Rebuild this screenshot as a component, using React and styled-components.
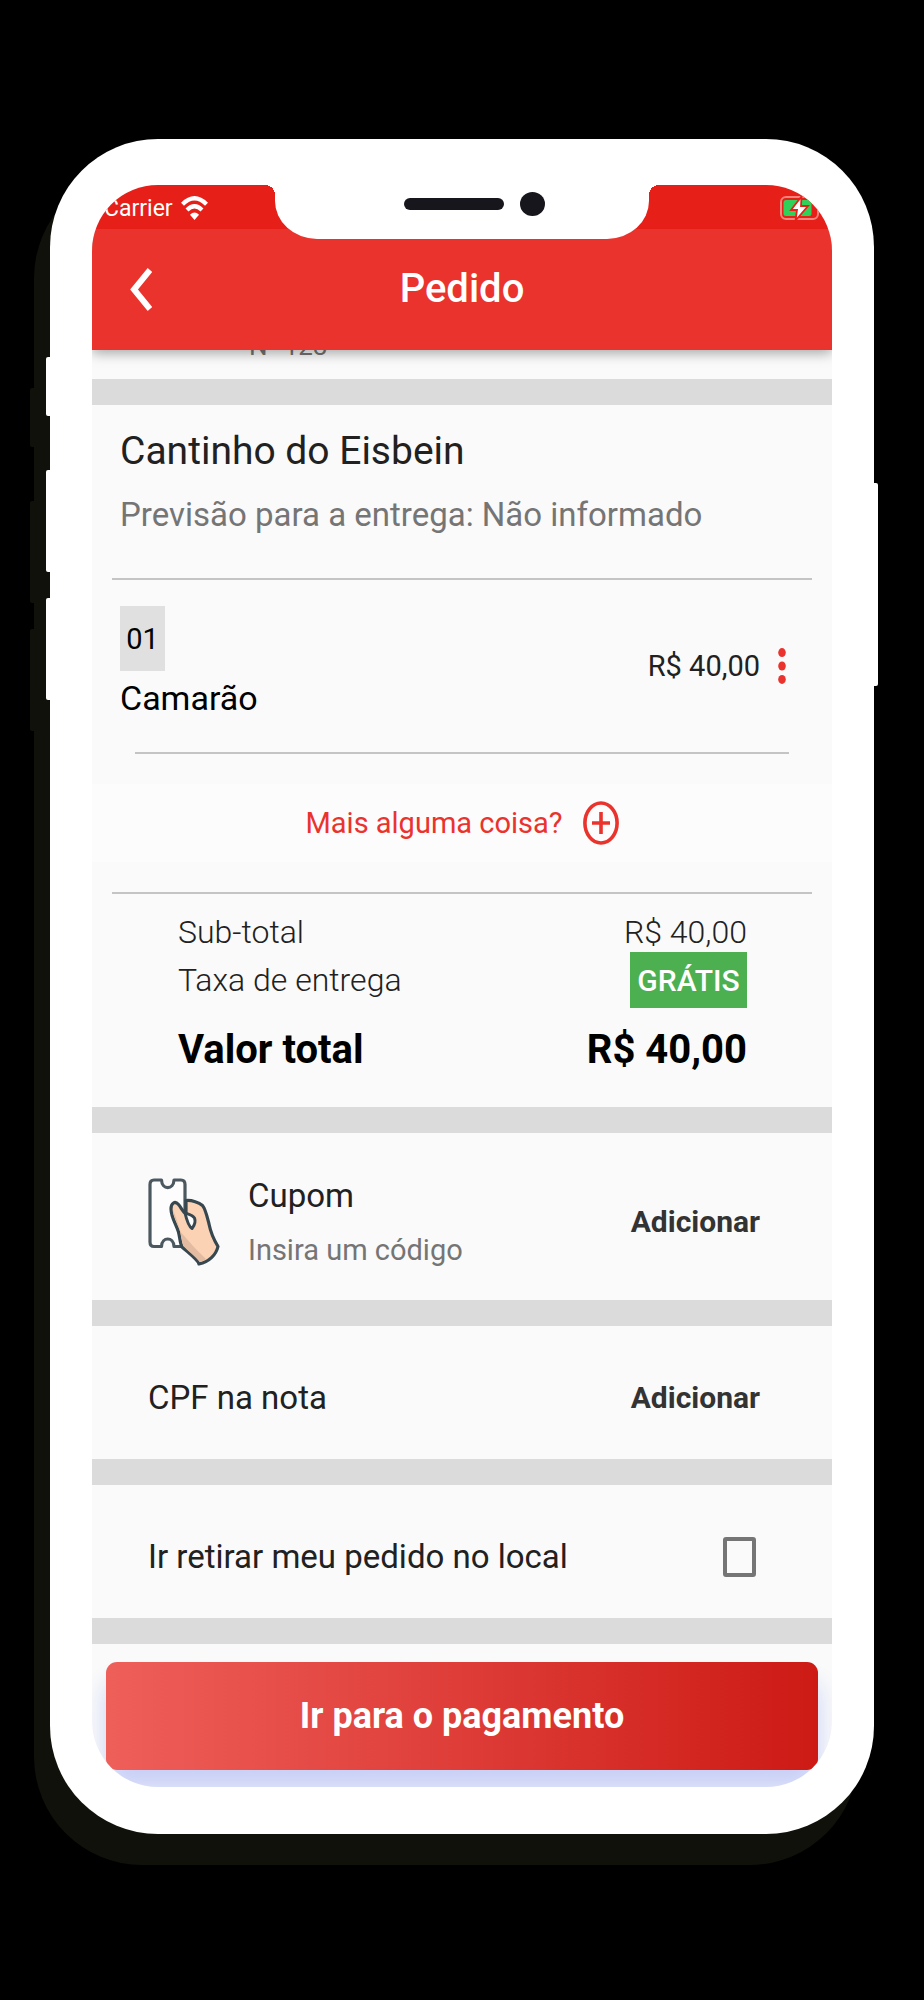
import React, { useState } from "react";
import styled, { createGlobalStyle } from "styled-components";

const color = {
  red: "#ea332d",
  redDark: "#e61f18",
  surface: "#fafafa",
  band: "#dbdbdb",
  rule: "#c4c4c4",
  ink: "#212121",
  muted: "#757575",
  green: "#4caf50",
  shadow: "#0f110a",
};

const GlobalStyle = createGlobalStyle`
  *, *::before, *::after { box-sizing: border-box; }
  body {
    margin: 0;
    background: #000;
    font-family: Roboto, "Liberation Sans", sans-serif;
    color: ${color.ink};
  }
  button { font: inherit; color: inherit; border: 0; padding: 0; background: none; cursor: pointer; }
  p, h1, h2 { margin: 0; font-weight: 400; }
`;

const Page = styled.main`
  min-height: 100vh;
  padding: 139px 50px 166px;
`;

const Phone = styled.div`
  position: relative;
  padding: 46px 42px 47px;
  background: #fff;
  border-radius: 108px;
  box-shadow: -16px 31px 0 ${color.shadow};
`;

const SideKey = styled.span`
  position: absolute;
  top: ${(p) => p.$top}px;
  ${(p) => p.$side}: -4px;
  width: 4px;
  height: ${(p) => p.$length}px;
  background: #fff;
  border-radius: ${(p) => (p.$side === "left" ? "2px 0 0 2px" : "0 2px 2px 0")};
  box-shadow: ${(p) => (p.$side === "left" ? `-16px 31px 0 ${color.shadow}` : "none")};
`;

const Screen = styled.div`
  position: relative;
  overflow: hidden;
  border-radius: 66px;
  background: ${color.surface};
`;

const Notch = styled.div`
  position: absolute;
  z-index: 3;
  top: 0;
  left: 50%;
  transform: translateX(-50%);
  width: 374px;
  height: 54px;
  padding: 0 0 16px 24px;
  display: flex;
  align-items: center;
  justify-content: center;
  gap: 16px;
  background: #fff;
  border-radius: 0 0 42px 42px / 0 0 38px 38px;

  &::before,
  &::after {
    content: "";
    position: absolute;
    top: 0;
    width: 10px;
    height: 10px;
  }
  &::before {
    right: 100%;
    background: radial-gradient(circle at 0 100%, transparent 10px, #fff 10px);
  }
  &::after {
    left: 100%;
    background: radial-gradient(circle at 100% 100%, transparent 10px, #fff 10px);
  }
`;

const Speaker = styled.span`
  width: 100px;
  height: 12px;
  border-radius: 6px;
  background: #17161c;
`;

const Camera = styled.span`
  width: 25px;
  height: 24px;
  border-radius: 50%;
  background: #17161c;
`;

const StatusBar = styled.div`
  position: relative;
  z-index: 2;
  display: flex;
  align-items: center;
  justify-content: space-between;
  height: 44px;
  padding: 2px 8px 0 12px;
  background: ${color.redDark};
  color: #fff;
  font-size: 23px;
  svg { display: block; }
`;

const Carrier = styled.span`
  display: flex;
  align-items: center;
  gap: 8px;
`;

const Header = styled.header`
  position: relative;
  z-index: 1;
  display: grid;
  grid-template-columns: 1fr auto 1fr;
  align-items: center;
  height: 121px;
  padding: 0 30px;
  background: ${color.red};
  color: #fff;
  box-shadow: 0 3px 12px rgba(0, 0, 0, 0.35);
`;

const BackButton = styled.button`
  justify-self: start;
  padding: 8px;
  svg { display: block; }
`;

const Title = styled.h1`
  font-size: 40px;
  font-weight: 500;
  line-height: 48px;
  padding-bottom: 2px;
`;

const AddressPeek = styled.div`
  display: flex;
  align-items: flex-end;
  height: 29px;
  padding: 0 0 17px 157px;
  overflow: hidden;
  font-size: 26px;
  line-height: 32px;
  color: ${color.muted};
`;

const Band = styled.div`
  height: 26px;
  background: ${color.band};
`;

const Rule = styled.hr`
  height: 2px;
  margin: 0 ${(p) => p.$inset}px;
  border: 0;
  background: ${color.rule};
`;

const Store = styled.section`
  padding: 22px 28px 43px;
  display: flex;
  flex-direction: column;
  gap: 20px;
`;

const StoreName = styled.h2`
  font-size: 39px;
  line-height: 48px;
`;

const Forecast = styled.p`
  font-size: 33px;
  line-height: 40px;
  color: ${color.muted};
`;

const Item = styled.section`
  display: flex;
  align-items: center;
  gap: 12px;
  padding: 26px 40px 34px 28px;
`;

const ItemInfo = styled.div`
  flex: 1;
  display: flex;
  flex-direction: column;
  align-items: flex-start;
  gap: 7px;
  color: #000;
  font-size: 34px;
  line-height: 40px;
`;

const Quantity = styled.span`
  display: grid;
  place-items: center;
  width: 45px;
  height: 65px;
  background: #e0e0e0;
  font-size: 29px;
`;

const ItemPrice = styled.span`
  padding-top: 8px;
  font-size: 29px;
`;

const MenuButton = styled.button`
  display: grid;
  place-items: center;
  width: 20px;
  padding-top: 8px;
  color: ${color.red};
`;

const MoreButton = styled.button`
  display: flex;
  align-items: center;
  justify-content: center;
  gap: 20px;
  width: 100%;
  height: 78px;
  margin: 30px 0;
  background: #fcfcfc;
  color: ${color.red};
  font-size: 29px;
`;

const Totals = styled.section`
  padding: 18px 85px 33px 86px;
`;

const TotalRow = styled.div`
  display: flex;
  align-items: center;
  justify-content: space-between;
  height: ${(p) => p.$height}px;
  font-size: 32px;
  font-weight: 300;
`;

const GrandTotal = styled.div`
  display: flex;
  justify-content: space-between;
  margin-top: 18px;
  color: #000;
  font-size: 40px;
  font-weight: 700;
  line-height: 48px;
`;

const FreeTag = styled.span`
  display: grid;
  place-items: center;
  width: 117px;
  height: 56px;
  background: ${color.green};
  color: #fff;
  font-size: 30px;
  font-weight: 500;
`;

const OptionRow = styled.section`
  display: flex;
  align-items: center;
  gap: 28px;
  min-height: ${(p) => (p.$tall ? 167 : 133)}px;
  padding: 10px 72px 0 56px;
`;

const OptionText = styled.div`
  flex: 1;
  display: flex;
  flex-direction: column;
  gap: 16px;
`;

const OptionTitle = styled.span`
  font-size: 33px;
  line-height: 40px;
`;

const OptionHint = styled.span`
  font-size: 29px;
  line-height: 36px;
  color: ${color.muted};
`;

const AddButton = styled.button`
  font-size: 30px;
  font-weight: 700;
  color: #333;
`;

const PickupLabel = styled.label`
  flex: 1;
  display: flex;
  align-items: center;
  justify-content: space-between;
`;

const Checkbox = styled.input`
  appearance: none;
  width: 33px;
  height: 40px;
  margin: 0 4px;
  border: 4px solid ${color.muted};
  border-radius: 3px;
  &:checked { background: ${color.red}; }
`;

const Footer = styled.footer`
  padding: 18px 14px 17px;
`;

const PayButton = styled.button`
  width: 100%;
  height: 108px;
  border-radius: 11px;
  background: linear-gradient(90deg, #ef5f5a, #cd1a15);
  box-shadow: 0 22px 24px #c9d0f6;
  color: #fff;
  font-size: 36px;
  font-weight: 700;
`;

const WifiIcon = () => (
  <svg width="27" height="24" viewBox="0 0 27 24" fill="none" stroke="#fff" strokeWidth="4.2">
    <path d="M1.5 8.2 Q13.5 -3.6 25.5 8.2" />
    <path d="M6 14 Q13.5 6.6 21 14" />
    <path d="M9 18.8 Q13.5 14.4 18 18.8 L13.5 24Z" fill="#fff" stroke="none" />
  </svg>
);

const BatteryIcon = () => (
  <svg width="44" height="24" viewBox="0 0 44 24">
    <rect x="1" y="1" width="37" height="22" rx="5" fill="none" stroke="#f5827d" strokeWidth="2" />
    <path d="M40.5 8 Q43 12 40.5 16Z" fill="#f5827d" />
    <rect x="3.5" y="4" width="28" height="16" rx="2.5" fill="#30d158" />
    <path d="M21.5 0.5 L11 14 H17 L15.5 24.5 L28 10 H21Z" fill="#fff" stroke={color.redDark} strokeWidth="1.8" />
  </svg>
);

const BackIcon = () => (
  <svg width="22" height="43" viewBox="0 0 22 43" fill="none" stroke="#fff" strokeWidth="6">
    <path d="M20 2 L4 21.5 L20 41" />
  </svg>
);

const DotsIcon = () => (
  <svg width="8" height="36" viewBox="0 0 8 36" fill="currentColor">
    <ellipse cx="4" cy="4.6" rx="3.8" ry="4.5" />
    <ellipse cx="4" cy="18" rx="3.8" ry="4.5" />
    <ellipse cx="4" cy="31.4" rx="3.8" ry="4.5" />
  </svg>
);

const PlusIcon = () => (
  <svg width="36" height="44" viewBox="0 0 36 44" fill="none" stroke="currentColor" strokeWidth="3.6">
    <ellipse cx="18" cy="22" rx="16.1" ry="20" />
    <path d="M9 22 H27 M18 11 V33" />
  </svg>
);

const CouponIcon = () => (
  <svg width="72" height="88" viewBox="0 0 72 88" strokeLinejoin="round">
    <path
      d="M6 2 H13.5 C14 12.2 25.5 12.2 26 2 H33 Q37 2 37 6.5 V64 Q37 68.5 33 68.5 H26 C25.5 58.5 14 58.5 13.5 68.5 H6 Q2 68.5 2 64 V6.5 Q2 2 6 2Z"
      fill="#fdfdfd" stroke="#4b585f" strokeWidth="3.2"
    />
    <path
      d="M38 22.5 C44 22 51 24.5 54.5 27.5 C57.5 31 59 38 61 46 C63 56 66 62 70 68.5 C68 77 61 84 51 86 C50 82 42 76 34 69 C32 65 32 60 30.5 54 C28 46 23 39 23 31 C23 25 27 22.5 30.5 26.5 C33.5 30 34.5 33.5 38 36Z"
      fill="#fbd2b4" stroke="#37474f" strokeWidth="3.2"
    />
    <path d="M25 32 C28 40 31 47 32.5 54 C40 62 48 72 58 81 Q55 83.5 52 84 C46 77 40 73 35.5 68 C33.5 62 33 56 31.5 51 C29 44 25 38 25 32Z" fill="#e2bba0" />
    <path d="M37 35 C41 36.5 44 36.5 46.5 40 C48 44 46 48 44 50.5 C41.5 49 39 43.5 37 35Z" fill="#fdfdfd" stroke="#37474f" strokeWidth="3" />
  </svg>
);

export default function App() {
  const [pickup, setPickup] = useState(false);
  return (
    <Page>
      <GlobalStyle />
      <Phone>
        <SideKey $side="left" $top={218} $length={59} />
        <SideKey $side="left" $top={331} $length={102} />
        <SideKey $side="left" $top={459} $length={102} />
        <SideKey $side="right" $top={344} $length={203} />
        <Screen>
          <Notch>
            <Speaker />
            <Camera />
          </Notch>
          <StatusBar>
            <Carrier>
              Carrier
              <WifiIcon />
            </Carrier>
            <BatteryIcon />
          </StatusBar>
          <Header>
            <BackButton aria-label="Voltar">
              <BackIcon />
            </BackButton>
            <Title>Pedido</Title>
          </Header>
          <AddressPeek>N° 123</AddressPeek>
          <Band />
          <Store>
            <StoreName>Cantinho do Eisbein</StoreName>
            <Forecast>Previsão para a entrega: Não informado</Forecast>
          </Store>
          <Rule $inset={20} />
          <Item>
            <ItemInfo>
              <Quantity>01</Quantity>
              <span>Camarão</span>
            </ItemInfo>
            <ItemPrice>R$ 40,00</ItemPrice>
            <MenuButton aria-label="Opções do item">
              <DotsIcon />
            </MenuButton>
          </Item>
          <Rule $inset={43} />
          <MoreButton>
            Mais alguma coisa?
            <PlusIcon />
          </MoreButton>
          <Rule $inset={20} />
          <Totals>
            <TotalRow $height={40}>
              <span>Sub-total</span>
              <span>R$ 40,00</span>
            </TotalRow>
            <TotalRow $height={56}>
              <span>Taxa de entrega</span>
              <FreeTag>GRÁTIS</FreeTag>
            </TotalRow>
            <GrandTotal>
              <span>Valor total</span>
              <span>R$ 40,00</span>
            </GrandTotal>
          </Totals>
          <Band />
          <OptionRow $tall>
            <CouponIcon />
            <OptionText>
              <OptionTitle>Cupom</OptionTitle>
              <OptionHint>Insira um código</OptionHint>
            </OptionText>
            <AddButton>Adicionar</AddButton>
          </OptionRow>
          <Band />
          <OptionRow>
            <OptionText>
              <OptionTitle>CPF na nota</OptionTitle>
            </OptionText>
            <AddButton>Adicionar</AddButton>
          </OptionRow>
          <Band />
          <OptionRow>
            <PickupLabel>
              <OptionTitle>Ir retirar meu pedido no local</OptionTitle>
              <Checkbox type="checkbox" checked={pickup} onChange={(e) => setPickup(e.target.checked)} />
            </PickupLabel>
          </OptionRow>
          <Band />
          <Footer>
            <PayButton>Ir para o pagamento</PayButton>
          </Footer>
        </Screen>
      </Phone>
    </Page>
  );
}
